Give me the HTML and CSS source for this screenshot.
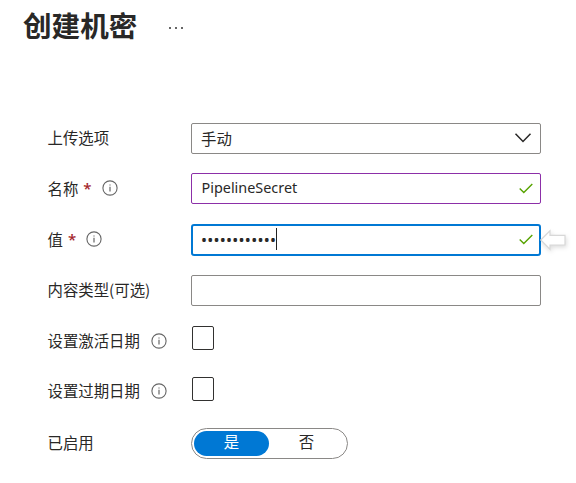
FILE: index.html
```html
<!DOCTYPE html>
<html lang="zh-CN">
<head>
<meta charset="utf-8">
<title>创建机密</title>
<link rel="stylesheet" href="styles.css">
</head>
<body>
<svg class="defs" aria-hidden="true">
  <symbol id="info" viewBox="0 0 16 16"><circle cx="8" cy="8" r="7.1" fill="none" stroke="#666" stroke-width="1.1"/><path d="M8 6.8V11.5M8 4.4V5.6" stroke="#666" stroke-width="1.2"/></symbol>
  <symbol id="check" viewBox="0 0 14 11"><path d="M.7 5.5 4.8 9.6 13.3 1" fill="none" stroke="#57a300" stroke-width="1.4"/></symbol>
</svg>
<header class="header"><h1 class="title">创建机密</h1><span class="more"><i></i><i></i><i></i></span></header>
<main class="form">
  <div class="row">
    <span class="label">上传选项</span>
    <div class="field"><span class="value">手动</span><svg class="chevron" viewBox="0 0 16 10"><path d="M.5 .8 8 8.5 15.5 .8" fill="none" stroke="#292827" stroke-width="1.5"/></svg></div>
  </div>
  <div class="row">
    <span class="label">名称<b class="req">*</b><svg class="info"><use href="#info"/></svg></span>
    <div class="field edited"><span class="latin">PipelineSecret</span><svg class="check"><use href="#check"/></svg></div>
  </div>
  <div class="row">
    <span class="label">值<b class="req">*</b><svg class="info"><use href="#info"/></svg></span>
    <div class="field focused"><span class="secret">••••••••••••</span><span class="caret"></span><svg class="check"><use href="#check"/></svg>
      <svg class="pointer" viewBox="0 0 28 22"><path d="M.8 11 10 1.8V6.3H25V16H10V20.2Z" fill="#fff" stroke="#d8d8d8" stroke-width="1.2"/></svg>
    </div>
  </div>
  <div class="row">
    <span class="label">内容类型(可选)</span>
    <div class="field"></div>
  </div>
  <div class="row">
    <span class="label">设置激活日期<svg class="info"><use href="#info"/></svg></span>
    <span class="box"></span>
  </div>
  <div class="row">
    <span class="label">设置过期日期<svg class="info"><use href="#info"/></svg></span>
    <span class="box"></span>
  </div>
  <div class="row">
    <span class="label">已启用</span>
    <div class="toggle"><span class="option on">是</span><span class="option">否</span></div>
  </div>
</main>
</body>
</html>
```
FILE: styles.css
```css
* { box-sizing: border-box; }
body {
  margin: 0;
  background: #fff;
  color: #292827;
  font: 15.4px/20px "Noto Sans CJK SC", sans-serif;
  overflow: hidden;
}
.defs { display: none; }
svg { flex: none; overflow: visible; }
.header { display: flex; align-items: center; height: 50px; padding-left: 23px; }
.title { margin: 0; font-size: 28.6px; line-height: 40px; font-weight: 700; white-space: nowrap; }
.more { display: flex; gap: 4px; margin: 5px 0 0 32px; }
.more i { width: 2px; height: 2px; background: #333; border-radius: 1px; }
.form {
  display: grid;
  grid-template-rows: 50px 51px 51px 50px 51px 50px 53px;
  padding: 63px 0 0 48px;
}
.row { display: grid; grid-template-columns: 143px 350px; align-items: center; }
.label { display: flex; align-items: center; margin: 0 0 2px -.5px; white-space: nowrap; }
.req { margin-left: 5px; color: #a4262c; font: 600 15px/20px "Open Sans", sans-serif; }
.info { width: 16px; height: 16px; margin: 2px 0 0 11px; }
.req + .info { margin: 1px 0 0 10px; }
.field {
  position: relative;
  display: flex;
  align-items: center;
  height: 31px;
  padding: 0 9px;
  border: 1px solid #8a8886;
  border-radius: 2px;
}
.value { margin-bottom: 1px; }
.edited { border-color: #8c2fa8; padding-right: 7px; }
.focused { height: 32px; border: 2px solid #0078d4; border-radius: 3px; padding: 0 6px 0 8px; }
.latin { margin: 0 0 2px .5px; font: 14.4px/20px "Noto Sans", sans-serif; }
.chevron, .check { margin-left: auto; }
.chevron { width: 16px; height: 10px; }
.check { width: 14px; height: 11px; }
.secret { font: 16px/20px "Noto Sans", sans-serif; letter-spacing: .25px; }
.caret { width: 1px; height: 22px; background: #222; margin: 0 0 2px -.5px; }
.pointer { position: absolute; left: 347px; top: 3px; width: 28px; height: 22px; filter: drop-shadow(1px 2px 2px #0002); }
.box { width: 22px; height: 24px; margin: 0 0 5px 1px; border: 1px solid #323130; border-radius: 2px; }
.toggle {
  display: flex;
  width: 157px;
  height: 31px;
  margin-top: 2px;
  padding: 2px;
  border: 1px solid #8a8886;
  border-radius: 16px;
}
.option { width: 75px; height: 25px; line-height: 21px; text-align: center; border-radius: 13px; }
.on { background: #0078d4; color: #fff; }
```
